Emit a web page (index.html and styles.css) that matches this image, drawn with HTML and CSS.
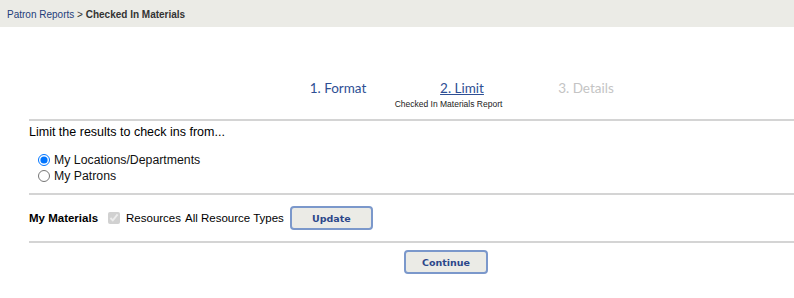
FILE: index.html
```html
<!DOCTYPE html>
<html>
<head>
<meta charset="utf-8">
<link rel="stylesheet" href="styles.css">
</head>
<body>
<div class="crumbs"><span class="crumb-link">Patron Reports</span> &gt; <span class="crumb-current">Checked In Materials</span></div>
<div class="steps">
  <div class="step done">1. Format</div>
  <div class="step active">
    <span class="step-label">2. Limit</span>
    <span class="step-sub">Checked In Materials Report</span>
  </div>
  <div class="step todo">3. Details</div>
</div>
<div class="content">
  <section class="block limit">
    <div class="prompt">Limit the results to check ins from...</div>
    <div class="radios">
      <label class="radio"><input type="radio" name="src" checked> My Locations/Departments</label>
      <label class="radio"><input type="radio" name="src"> My Patrons</label>
    </div>
  </section>
  <section class="block materials">
    <span class="mat-title">My Materials</span>
    <input type="checkbox" class="chk" checked disabled>
    <span class="mat-text">Resources</span>
    <span class="mat-text">All Resource Types</span>
    <button class="btn">Update</button>
  </section>
  <section class="block actions">
    <button class="btn">Continue</button>
  </section>
</div>
</body>
</html>
```

FILE: styles.css
```css
html, body { margin: 0; padding: 0; background: #fff; }
body { font-family: "Liberation Sans", Arial, sans-serif; color: #000; width: 794px; }

.crumbs {
  height: 27px;
  background: #ebebe6;
  font-size: 10px;
  line-height: 30px;
  padding-left: 7px;
  color: #333;
  box-sizing: border-box;
}
.crumb-link { color: #1f3d7a; }
.crumb-current { font-weight: bold; color: #333; }

.steps {
  display: flex;
  justify-content: center;
  padding-top: 53px;
  height: 39px;
  padding-left: 130px;
  font-family: Lato, "Open Sans", sans-serif;
  font-size: 13.5px;
}
.step { display: flex; flex-direction: column; align-items: center; width: 124px; }
.step.done { color: #2e4f94; }
.step.active .step-label { color: #2e4f94; text-decoration: underline; }
.step.todo { color: #c4c4c4; }
.step-sub {
  font-family: "Liberation Sans", Arial, sans-serif;
  font-size: 8.5px;
  color: #222;
  margin-top: 3px;
  margin-right: 27px;
  white-space: nowrap;
}

.content { margin-left: 29px; }
.block { border-top: 2px solid #d4d4d4; }

.limit { padding-top: 4px; height: 68px; }
.prompt { font-size: 12.5px; line-height: 14px; }
.radios { margin-top: 13px; display: flex; flex-direction: column; padding-left: 9px; }
.radio { font-size: 12.3px; line-height: 16px; display: flex; align-items: center; color: #111; }
.radio input { margin: 0 4px 0 0; width: 12px; height: 12px; }

.materials {
  height: 46px;
  display: flex;
  align-items: center;
  font-size: 11.5px;
}
.mat-title { font-weight: bold; margin-right: 10px; }
.chk { margin: 0 6px 0 0; width: 12px; height: 12px; }
.mat-text { margin-right: 4px; }

.btn {
  width: 84px;
  height: 24px;
  border: 2px solid #7b98cb;
  border-radius: 4px;
  background: #ebebe6;
  color: #2b478a;
  font-family: "DejaVu Sans", Verdana, sans-serif;
  font-weight: bold;
  font-size: 9.5px;
  padding: 0;
}
.materials .btn { margin-left: 2px; width: 83px; }

.actions { display: flex; justify-content: center; padding-top: 7px; padding-left: 69px; }
```
